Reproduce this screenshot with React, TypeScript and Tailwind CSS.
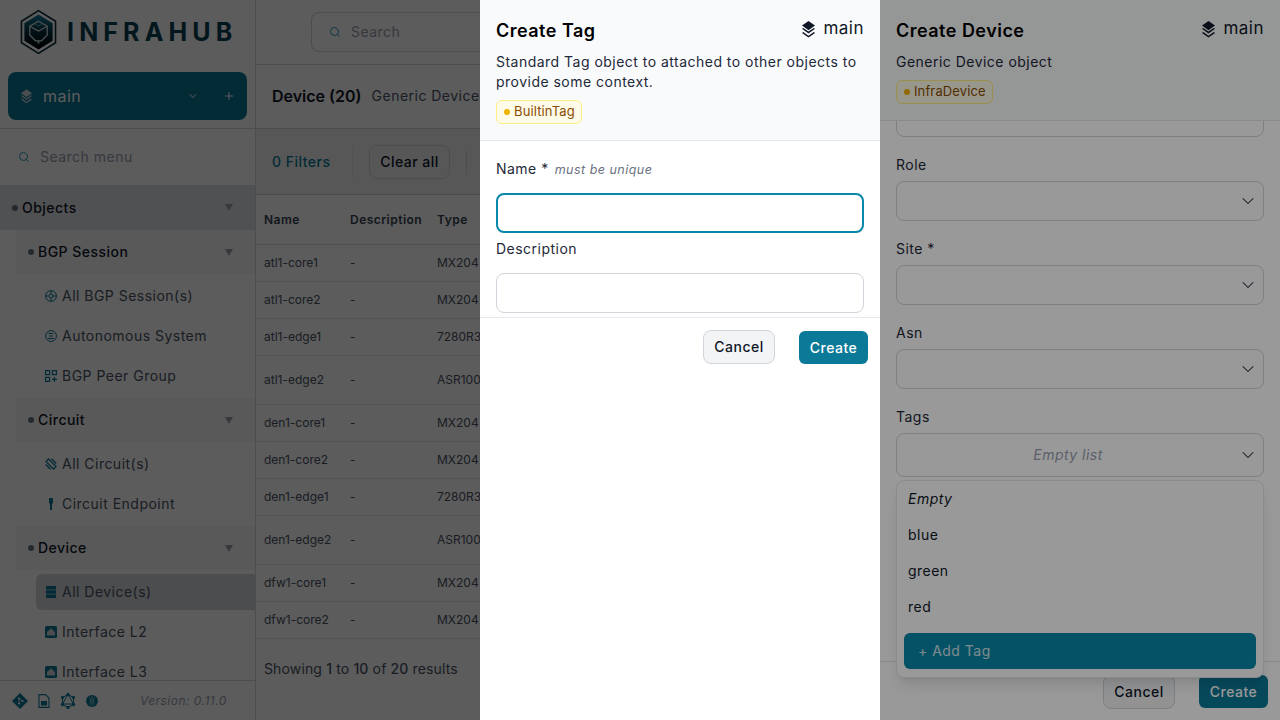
import { ChevronDown, Plus, Search } from "lucide-react";

const font = "font-['Inter','Noto_Sans',sans-serif]";

function Layers({ className }: { className: string }) {
  return (
    <svg viewBox="0 0 13 17" className={className} fill="currentColor">
      <path d="M6.5 0 13 4.6 6.5 9.2 0 4.6z" />
      <path d="M1.2 6.9 0 7.8l6.5 4.6L13 7.8l-1.2-.9-5.3 3.7z" />
      <path d="M1.2 11 0 11.9l6.5 4.6 6.5-4.6-1.2-.9-5.3 3.7z" />
    </svg>
  );
}

function Logo() {
  return (
    <svg viewBox="0 0 38 46" className="w-[37px] h-[46px]">
      <defs>
        <linearGradient id="hexfill" x1="0" y1="0" x2="0" y2="1">
          <stop offset="0" stopColor="#0f7f9f" />
          <stop offset="0.55" stopColor="#062a36" />
          <stop offset="1" stopColor="#000000" />
        </linearGradient>
      </defs>
      <path d="M19 1 36.5 12v22L19 45 1.5 34V12z" fill="none" stroke="#0a2a38" strokeWidth="1.6" />
      <path d="M19 5 33.5 14v18L19 41 4.500 32V14z" fill="url(#hexfill)" />
      <path d="M19 12 28 17v9l-6 6h-6l-6-6v-9z" fill="none" stroke="#d8dee2" strokeWidth="1.3" />
      <path d="M10 17l9 5 9-5" fill="none" stroke="#d8dee2" strokeWidth="1.2" />
      <path d="M19 32v3" stroke="#d8dee2" strokeWidth="1.6" />
      <path d="M14 14l5 3 5-3" fill="none" stroke="#6fb4c8" strokeWidth="0.8" />
    </svg>
  );
}

function Tri() {
  return (
    <svg viewBox="0 0 8 7" className="w-2 h-[7px] text-gray-400" fill="currentColor">
      <path d="M0 0h8L4 7z" />
    </svg>
  );
}

function Group({ label, top }: { label: string; top?: boolean }) {
  return (
    <div
      className={
        top
          ? "flex items-center h-[45px] bg-gray-300/70 pl-3 pr-[22px]"
          : "flex items-center h-11 ml-4 bg-gray-100/70 pl-3 pr-[22px]"
      }
    >
      <span className="w-[6px] h-[6px] rounded-full bg-gray-500 mr-1" />
      <span className="flex-1 text-sm font-medium text-gray-900">{label}</span>
      <Tri />
    </div>
  );
}

type IconKind = "globe" | "disc" | "grid" | "link" | "pin" | "server" | "port";

function ItemIcon({ kind }: { kind: IconKind }) {
  const cls = "w-3 h-3 text-[#0b7a98] shrink-0";
  if (kind === "globe")
    return (
      <svg viewBox="0 0 12 12" className={cls} fill="none" stroke="currentColor" strokeWidth="1">
        <circle cx="6" cy="6" r="5.400" />
        <circle cx="6" cy="6" r="2" />
        <path d="M6 .6V4M6 8v3.400M.6 6H4M8 6h3.400" />
      </svg>
    );
  if (kind === "disc")
    return (
      <svg viewBox="0 0 12 12" className={cls} fill="none" stroke="currentColor" strokeWidth="1">
        <circle cx="6" cy="6" r="5.400" />
        <path d="M3.500 3.500h5M4 6h4M3 8.500h6" />
      </svg>
    );
  if (kind === "grid")
    return (
      <svg viewBox="0 0 12 12" className={cls} fill="none" stroke="currentColor" strokeWidth="1.200">
        <rect x="0.600" y="0.600" width="4" height="4" />
        <rect x="7.400" y="0.600" width="4" height="4" />
        <rect x="0.600" y="7.400" width="4" height="4" />
        <path d="M9.400 7v5M7 9.400h5" />
      </svg>
    );
  if (kind === "link")
    return (
      <svg viewBox="0 0 12 12" className={cls} fill="none" stroke="currentColor" strokeWidth="1.300">
        <path d="M3.500 1 11 8.500 8.500 11 1 3.500zM.8 6.500l4.700 4.700M6.500.8l4.700 4.700" />
      </svg>
    );
  if (kind === "pin")
    return (
      <svg viewBox="0 0 12 12" className={cls} fill="currentColor">
        <path d="M4 0h4v5.500H7V12H5V5.500H4z" />
      </svg>
    );
  if (kind === "server")
    return (
      <svg viewBox="0 0 12 12" className={cls} fill="currentColor">
        <path d="M1 0h10v3.400H1zM1 4.300h10v3.400H1zM1 8.600h10V12H1z" />
      </svg>
    );
  return (
    <svg viewBox="0 0 12 12" className={cls}>
      <rect width="12" height="12" rx="1.500" fill="currentColor" />
      <path d="M2 9.500V5.500h1.500V4H5V2.500h2V4h1.500v1.500H10v4z" fill="#d1d5db" />
    </svg>
  );
}

function NavItem({ label, icon, active }: { label: string; icon: IconKind; active?: boolean }) {
  return (
    <div
      className={
        active
          ? "flex items-center gap-[5px] h-9 my-[2px] ml-9 pl-[9px] bg-gray-300 rounded-l-md text-sm text-gray-600"
          : "flex items-center gap-[5px] h-10 ml-9 pl-[9px] text-sm text-gray-600"
      }
    >
      <ItemIcon kind={icon} />
      {label}
    </div>
  );
}

function Sidebar() {
  return (
    <aside className="w-[256px] shrink-0 h-full border-r border-gray-300 bg-white flex flex-col">
      <div className="h-[64px] shrink-0 flex items-center pl-5 gap-[10px]">
        <Logo />
        <span className="text-[25px] font-bold tracking-[0.205em] text-[#083f52] leading-none">INFRAHUB</span>
      </div>
      <div className="h-[65px] shrink-0 px-2 pt-2 border-b border-gray-300">
        <div className="h-12 rounded-lg bg-[#0b7a98] flex items-center pl-[13px] pr-3 text-white">
          <Layers className="w-[11px] h-[15px] text-gray-300" />
          <span className="ml-[11px] flex-1 text-base">main</span>
          <ChevronDown className="w-3 h-3 mr-6" />
          <Plus className="w-3 h-3" />
        </div>
      </div>
      <div className="h-[56px] shrink-0 flex items-center pl-[18px] gap-[10px]">
        <Search className="w-3 h-3 text-[#2a9bb8]" />
        <span className="text-sm text-gray-400">Search menu</span>
      </div>
      <div className="flex-1 overflow-hidden">
        <Group label="Objects" top />
        <Group label="BGP Session" />
        <div className="py-[2px]">
          <NavItem label="All BGP Session(s)" icon="globe" />
          <NavItem label="Autonomous System" icon="disc" />
          <NavItem label="BGP Peer Group" icon="grid" />
        </div>
        <Group label="Circuit" />
        <div className="py-[2px]">
          <NavItem label="All Circuit(s)" icon="link" />
          <NavItem label="Circuit Endpoint" icon="pin" />
        </div>
        <Group label="Device" />
        <div className="py-[2px]">
          <NavItem label="All Device(s)" icon="server" active />
          <NavItem label="Interface L2" icon="port" />
          <NavItem label="Interface L3" icon="port" />
        </div>
      </div>
      <div className="h-10 shrink-0 border-t border-gray-300 flex items-center pl-3 text-[#0b7a98]">
        <svg viewBox="0 0 16 16" className="w-4 h-4" fill="currentColor">
          <path d="M8 0l8 8-8 8-8-8z" />
          <circle cx="7" cy="5.500" r="1.100" fill="#ffffff" />
          <circle cx="7" cy="10.500" r="1.100" fill="#ffffff" />
          <circle cx="10.500" cy="8" r="1.100" fill="#ffffff" />
          <path d="M7 5.500v5M7 5.500 10.500 8" stroke="#ffffff" strokeWidth="0.700" />
        </svg>
        <svg viewBox="0 0 12 14" className="ml-[10px] w-3 h-[14px]" fill="none" stroke="currentColor" strokeWidth="1.100">
          <path d="M1 .6h6.500L11 4v9.400H1z" />
          <path d="M3.500 7.500h5v3.500h-5z" fill="currentColor" />
        </svg>
        <svg viewBox="0 0 16 16" className="ml-[10px] w-4 h-4" fill="none" stroke="currentColor" strokeWidth="1">
          <path d="M8 1.500 13.500 11h-11zM8 1.500 2.500 4.500v7L8 14.500l5.500-3v-7z" />
          <circle cx="8" cy="1.500" r="1.200" fill="currentColor" />
          <circle cx="8" cy="14.500" r="1.200" fill="currentColor" />
          <circle cx="2.500" cy="4.500" r="1.200" fill="currentColor" />
          <circle cx="13.500" cy="4.500" r="1.200" fill="currentColor" />
          <circle cx="2.500" cy="11.500" r="1.200" fill="currentColor" />
          <circle cx="13.500" cy="11.500" r="1.200" fill="currentColor" />
        </svg>
        <svg viewBox="0 0 12 12" className="ml-[10px] w-3 h-3" fill="currentColor">
          <circle cx="6" cy="6" r="6" />
          <path d="M6 1v10M3.500 2.500c1.500 2 1.500 5 0 7M8.500 2.500c-1.500 2-1.500 5 0 7" stroke="#ffffff" strokeWidth="0.500" fill="none" />
        </svg>
        <span className="ml-[42px] text-xs italic text-gray-400">Version: 0.11.0</span>
      </div>
    </aside>
  );
}

const rows = [
  { name: "atl1-core1", type: "MX204", tall: false },
  { name: "atl1-core2", type: "MX204", tall: false },
  { name: "atl1-edge1", type: "7280R3", tall: false },
  { name: "atl1-edge2", type: "ASR1002-HX", tall: true },
  { name: "den1-core1", type: "MX204", tall: false },
  { name: "den1-core2", type: "MX204", tall: false },
  { name: "den1-edge1", type: "7280R3", tall: false },
  { name: "den1-edge2", type: "ASR1002-HX", tall: true },
  { name: "dfw1-core1", type: "MX204", tall: false },
  { name: "dfw1-core2", type: "MX204", tall: false },
];

function Main() {
  return (
    <main className="flex-1 h-full bg-white flex flex-col min-w-0">
      <div className="h-[65px] shrink-0 border-b border-gray-300 pl-[55px] pt-3">
        <div className="h-10 w-[500px] rounded-lg border border-gray-300 flex items-center pl-[17px] gap-[10px]">
          <Search className="w-3 h-3 text-[#2a9bb8]" />
          <span className="text-sm text-gray-400">Search</span>
        </div>
      </div>
      <div className="h-[64px] shrink-0 border-b border-gray-300 pl-4 pb-[2px] flex items-center gap-[10px]">
        <span className="text-base font-semibold tracking-normal text-gray-900">Device (20)</span>
        <span className="text-sm text-gray-600 whitespace-nowrap">Generic Device object</span>
      </div>
      <div className="h-[66px] shrink-0 border-b border-gray-300 bg-gray-100 pl-4 flex items-center">
        <span className="w-[81px] text-sm font-medium text-[#0b7a98] border-r border-gray-200 leading-8">0 Filters</span>
        <span className="ml-4 h-[34px] w-[81px] flex items-center justify-center rounded-lg border border-gray-300 bg-gray-100 text-sm font-medium text-gray-900">Clear all</span>
        <span className="ml-4 h-6 border-r border-gray-300" />
      </div>
      <div className="h-[50px] shrink-0 border-b border-gray-300 grid grid-cols-[86px_87px_1fr] items-center pl-2 text-xs font-semibold text-gray-700">
        <span>Name</span>
        <span>Description</span>
        <span>Type</span>
      </div>
      {rows.map((r) => (
        <div
          key={r.name}
          className={
            r.tall
              ? "h-[49px] shrink-0 border-b border-gray-200 grid grid-cols-[86px_87px_1fr] items-center pl-2 text-xs tracking-normal text-gray-600"
              : "h-[37px] shrink-0 border-b border-gray-200 grid grid-cols-[86px_87px_1fr] items-center pl-2 text-xs tracking-normal text-gray-600"
          }
        >
          <span>{r.name}</span>
          <span>-</span>
          <span>{r.type}</span>
        </div>
      ))}
      <div className="pl-2 mt-5 text-sm tracking-[0.01em] text-gray-600">
        Showing <span className="font-medium">1</span> to <span className="font-medium">10</span> of <span className="font-medium">20</span> results
      </div>
    </main>
  );
}

function PanelHeader({ title, text, tag, tall }: { title: string; text: string; tag: string; tall?: boolean }) {
  return (
    <div className={tall ? "h-[141px] shrink-0 bg-gray-50 border-b border-gray-200 px-4 pt-[19px]" : "h-[121px] shrink-0 bg-gray-50 border-b border-gray-200 px-4 pt-[19px]"}>
      <div className="flex justify-between items-start h-[24px]">
        <span className="text-lg font-semibold text-black leading-6">{title}</span>
        <span className="flex items-center text-[17px] text-gray-900 leading-5 -mt-[1px]">
          <Layers className="w-[13px] h-[17px] mr-[8px] mt-[3px] text-gray-900" />
          main
        </span>
      </div>
      <p className="mt-[9px] text-sm leading-5 text-gray-800">{text}</p>
      <span className="mt-[8px] inline-flex items-center h-6 pl-[7px] pr-[6px] rounded-md border border-yellow-200 bg-yellow-50 text-[13px] tracking-[0.01em] text-yellow-800">
        <span className="w-[6px] h-[6px] rounded-full bg-yellow-500 mr-1" />
        {tag}
      </span>
    </div>
  );
}

function SelectField({ label }: { label: string }) {
  return (
    <div className="h-[84px] pt-[18px]">
      <div className="text-sm leading-5 text-gray-800">{label}</div>
      <div className="mt-[6px] h-10 rounded-lg border border-gray-300 bg-white flex items-center justify-end pr-[5px]">
        <ChevronDown strokeWidth={1.25} className="w-5 h-5 text-gray-800" />
      </div>
    </div>
  );
}

function DevicePanel() {
  return (
    <section className="absolute top-0 right-0 w-[400px] h-full bg-white flex flex-col">
      <PanelHeader title="Create Device" text="Generic Device object" tag="InfraDevice" />
      <div className="flex-1 overflow-hidden px-4">
        <div className="h-10 -mt-6 rounded-lg border border-gray-300" />
        <SelectField label="Role" />
        <SelectField label="Site *" />
        <SelectField label="Asn" />
        <div className="relative pt-[18px]">
          <div className="text-sm leading-5 text-gray-800">Tags</div>
          <div className="relative mt-[6px] h-11 rounded-lg border border-gray-300 bg-white flex items-center justify-center pr-6 text-sm italic text-gray-400">
            Empty list
            <ChevronDown strokeWidth={1.25} className="absolute right-[5px] top-[11px] w-5 h-5 text-gray-800" />
          </div>
        </div>
      </div>
      <div className="h-[59px] shrink-0 border-t border-gray-200 flex items-start justify-end pr-3 pt-[13px] gap-6">
        <span className="h-[34px] w-[72px] flex items-center justify-center rounded-lg border border-gray-300 bg-gray-100 text-sm font-medium text-gray-900">Cancel</span>
        <span className="h-[33px] w-[69px] flex items-center justify-center rounded-md bg-[#0b7a98] text-sm font-medium text-white">Create</span>
      </div>
      <div className="absolute left-4 top-[480px] w-[368px] h-[198px] rounded-lg border border-gray-200 bg-white shadow-lg text-sm text-gray-900 px-[7px]">
        <div className="h-9 flex items-center pl-1 italic">Empty</div>
        <div className="h-9 flex items-center pl-1">blue</div>
        <div className="h-9 flex items-center pl-1">green</div>
        <div className="h-9 flex items-center pl-1">red</div>
        <div className="h-9 mt-2 rounded-md bg-[#0987a8] text-white/80 flex items-center pl-[14px]">+ Add Tag</div>
      </div>
    </section>
  );
}

function TagPanel() {
  return (
    <section className="absolute top-0 left-[480px] w-[400px] h-full bg-white flex flex-col">
      <PanelHeader title="Create Tag" text="Standard Tag object to attached to other objects to provide some context." tag="BuiltinTag" tall />
      <div className="px-4 pt-[18px] pb-1 border-b border-gray-200">
        <div className="flex items-baseline gap-[6px] leading-5">
          <span className="text-sm text-gray-800">Name *</span>
          <span className="text-[12.5px] italic text-gray-500">must be unique</span>
        </div>
        <div className="mt-[13px] h-10 rounded-lg border-2 border-[#0987a8]" />
        <div className="mt-[6px] text-sm leading-5 text-gray-800">Description</div>
        <div className="mt-[14px] h-10 rounded-lg border border-gray-300" />
      </div>
      <div className="flex items-start justify-end pr-3 pt-3 gap-6">
        <span className="h-[34px] w-[72px] flex items-center justify-center rounded-lg border border-gray-300 bg-gray-100 text-sm font-medium text-gray-900">Cancel</span>
        <span className="h-[33px] w-[69px] mt-[1px] flex items-center justify-center rounded-md bg-[#0b7a98] text-sm font-medium text-white">Create</span>
      </div>
    </section>
  );
}

export default function App() {
  return (
    <div className={`relative w-[1280px] h-[720px] overflow-hidden flex tracking-[0.03em] ${font}`}>
      <Sidebar />
      <Main />
      <div className="absolute inset-0 bg-black/40" />
      <DevicePanel />
      <div className="absolute inset-0 bg-black/40" />
      <TagPanel />
    </div>
  );
}
